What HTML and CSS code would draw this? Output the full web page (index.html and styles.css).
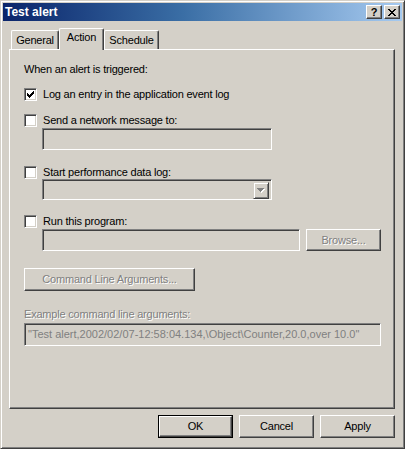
FILE: index.html
```html
<!DOCTYPE html>
<html>
<head>
<meta charset="utf-8">
<link rel="stylesheet" href="styles.css">
</head>
<body>
<div class="window">
  <div class="titlebar">
    <span class="title">Test alert</span>
    <div class="tb-buttons">
      <span class="tb-btn help">?</span>
      <span class="tb-btn close">
        <svg width="8" height="7" viewBox="0 0 8 7" shape-rendering="crispEdges"><path d="M0 0h2v1h-2zM6 0h2v1h-2zM1 1h2v1h-2zM5 1h2v1h-2zM2 2h4v1h-4zM3 3h2v1h-2zM2 4h4v1h-4zM1 5h2v1h-2zM5 5h2v1h-2zM0 6h2v1h-2zM6 6h2v1h-2z" fill="#000"/></svg>
      </span>
    </div>
  </div>
  <div class="client">
    <div class="tabs">
      <div class="tab tab-general">General</div>
      <div class="tab tab-action selected">Action</div>
      <div class="tab tab-schedule">Schedule</div>
    </div>
    <div class="panel">
      <div class="heading">When an alert is triggered:</div>

      <div class="cb-row row-log">
        <span class="checkbox">
          <svg width="7" height="7" viewBox="0 0 7 7" shape-rendering="crispEdges"><path d="M6 0h1v3h-1zM5 1h1v3h-1zM4 2h1v3h-1zM3 3h1v3h-1zM2 4h1v3h-1zM1 3h1v3h-1zM0 2h1v3h-1z" fill="#000"/></svg>
        </span>
        <span class="label">Log an entry in the application event log</span>
      </div>

      <div class="cb-row row-net">
        <span class="checkbox"></span>
        <span class="label">Send a network message to:</span>
      </div>
      <div class="field field-net"></div>

      <div class="cb-row row-perf">
        <span class="checkbox"></span>
        <span class="label">Start performance data log:</span>
      </div>
      <div class="field combo">
        <span class="combo-btn">
          <svg width="8" height="5" viewBox="0 0 8 5" shape-rendering="crispEdges"><path d="M1 1h7v1h-7zM2 2h5v1h-5zM3 3h3v1h-3zM4 4h1v1h-1z" fill="#fff"/><path d="M0 0h7v1h-7zM1 1h5v1h-5zM2 2h3v1h-3zM3 3h1v1h-1z" fill="#808080"/></svg>
        </span>
      </div>

      <div class="cb-row row-run">
        <span class="checkbox"></span>
        <span class="label">Run this program:</span>
      </div>
      <div class="prog-row">
        <div class="field field-prog"></div>
        <div class="btn browse disabled">Browse...</div>
      </div>

      <div class="btn cmd disabled">Command Line Arguments...</div>

      <div class="example-label disabled">Example command line arguments:</div>
      <div class="field field-example">"Test alert,2002/02/07-12:58:04.134,\Object\Counter,20.0,over 10.0"</div>
    </div>
    <div class="footer">
      <div class="default-frame"><div class="btn">OK</div></div>
      <div class="btn">Cancel</div>
      <div class="btn">Apply</div>
    </div>
  </div>
</div>
</body>
</html>
```
FILE: styles.css
```css
* { box-sizing: border-box; }
html, body { margin: 0; padding: 0; background: #d4d0c8; }
body {
  font-family: "Liberation Sans", Arial, sans-serif;
  font-size: 11px;
  letter-spacing: -0.2px;
  color: #000;
}
.window {
  width: 405px;
  height: 449px;
  background: #d4d0c8;
  border: 1px solid;
  border-color: #d4d0c8 #404040 #404040 #d4d0c8;
  box-shadow: inset 1px 1px 0 #fff, inset -1px -1px 0 #808080;
  padding: 2px;
}
.titlebar {
  height: 18px;
  background: linear-gradient(to right, #0a246a 0%, #3a6ea5 45%, #a6caf0 100%);
  display: flex;
  align-items: center;
  justify-content: space-between;
  padding: 0 2px 0 2px;
}
.title {
  color: #fff;
  font-weight: bold;
  font-size: 12px;
  letter-spacing: 0;
  line-height: 18px;
}
.tb-buttons { display: flex; gap: 2px; }
.tb-btn {
  width: 16px;
  height: 14px;
  background: #d4d0c8;
  border: 1px solid;
  border-color: #fff #404040 #404040 #fff;
  box-shadow: inset -1px -1px 0 #808080;
  display: flex;
  align-items: center;
  justify-content: center;
  font-weight: bold;
  font-size: 11px;
  line-height: 12px;
  letter-spacing: 0;
}
.tb-btn svg { display: block; }
.client {
  padding: 7px 0 0 6px;
}
.tabs {
  display: flex;
  align-items: flex-end;
  padding-left: 2px;
  height: 21px;
  position: relative;
  z-index: 1;
}
.tab {
  height: 19px;
  background: #d4d0c8;
  border-top: 1px solid #fff;
  border-left: 1px solid #fff;
  border-right: 1px solid #404040;
  box-shadow: inset -1px 0 0 #808080;
  border-radius: 2px 2px 0 0;
  display: flex;
  justify-content: center;
  padding-top: 3px;
  line-height: 13px;
}
.tab-general { width: 48px; }
.tab-action { width: 45px; }
.tab-schedule { width: 55px; }
.tab.selected {
  height: 22px;
  margin-bottom: -1px;
  padding-top: 2px;
}
.panel {
  width: 386px;
  height: 360px;
  border: 1px solid;
  border-color: #fff #404040 #404040 #fff;
  box-shadow: inset -1px -1px 0 #808080;
  padding: 0 0 0 14px;
  overflow: hidden;
}
.heading {
  margin-top: 13px;
  line-height: 13px;
  height: 13px;
}
.cb-row {
  display: flex;
  align-items: center;
  height: 13px;
  line-height: 13px;
}
.row-log { margin-top: 12px; }
.row-net { margin-top: 13px; }
.row-perf { margin-top: 16px; }
.row-run { margin-top: 15px; }
.checkbox {
  width: 13px;
  height: 13px;
  background: #fff;
  border: 1px solid;
  border-color: #808080 #fff #fff #808080;
  box-shadow: inset 1px 1px 0 #404040, inset -1px -1px 0 #d4d0c8;
  display: flex;
  align-items: center;
  justify-content: center;
  flex: none;
}
.checkbox svg { display: block; }
.label { margin-left: 6px; }
.field {
  background: #d4d0c8;
  border: 1px solid;
  border-color: #808080 #fff #fff #808080;
  box-shadow: inset 1px 1px 0 #404040, inset -1px -1px 0 #d4d0c8;
  height: 22px;
}
.field-net { margin: 1px 0 0 18px; width: 230px; }
.combo {
  margin: 0 0 0 18px;
  width: 230px;
  height: 21px;
  display: flex;
  justify-content: flex-end;
  padding: 2px;
}
.combo-btn {
  width: 16px;
  height: 17px;
  border: 1px solid;
  border-color: #d4d0c8 #404040 #404040 #d4d0c8;
  box-shadow: inset 1px 1px 0 #fff, inset -1px -1px 0 #808080;
  display: flex;
  align-items: center;
  justify-content: center;
}
.combo-btn svg { display: block; }
.prog-row {
  display: flex;
  gap: 6px;
  margin: 1px 0 0 18px;
}
.field-prog { width: 258px; }
.btn {
  width: 75px;
  height: 23px;
  background: #d4d0c8;
  border: 1px solid;
  border-color: #fff #404040 #404040 #fff;
  box-shadow: inset -1px -1px 0 #808080;
  display: flex;
  align-items: center;
  justify-content: center;
  line-height: 13px;
}
.browse { height: 22px; }
.disabled {
  color: #808080;
  text-shadow: 1px 1px 0 #fff;
}
.cmd {
  width: 171px;
  margin-top: 17px;
}
.example-label {
  margin-top: 17px;
  line-height: 13px;
  height: 13px;
}
.field-example {
  margin-top: 2px;
  width: 357px;
  height: 23px;
  color: #808080;
  line-height: 21px;
  padding-left: 3px;
  white-space: nowrap;
  letter-spacing: 0;
}
.footer {
  width: 386px;
  margin-top: 6px;
  display: flex;
  justify-content: flex-end;
  gap: 6px;
}
.default-frame {
  width: 75px;
  height: 23px;
  border: 1px solid #000;
}
.default-frame .btn {
  width: 73px;
  height: 21px;
}
```
